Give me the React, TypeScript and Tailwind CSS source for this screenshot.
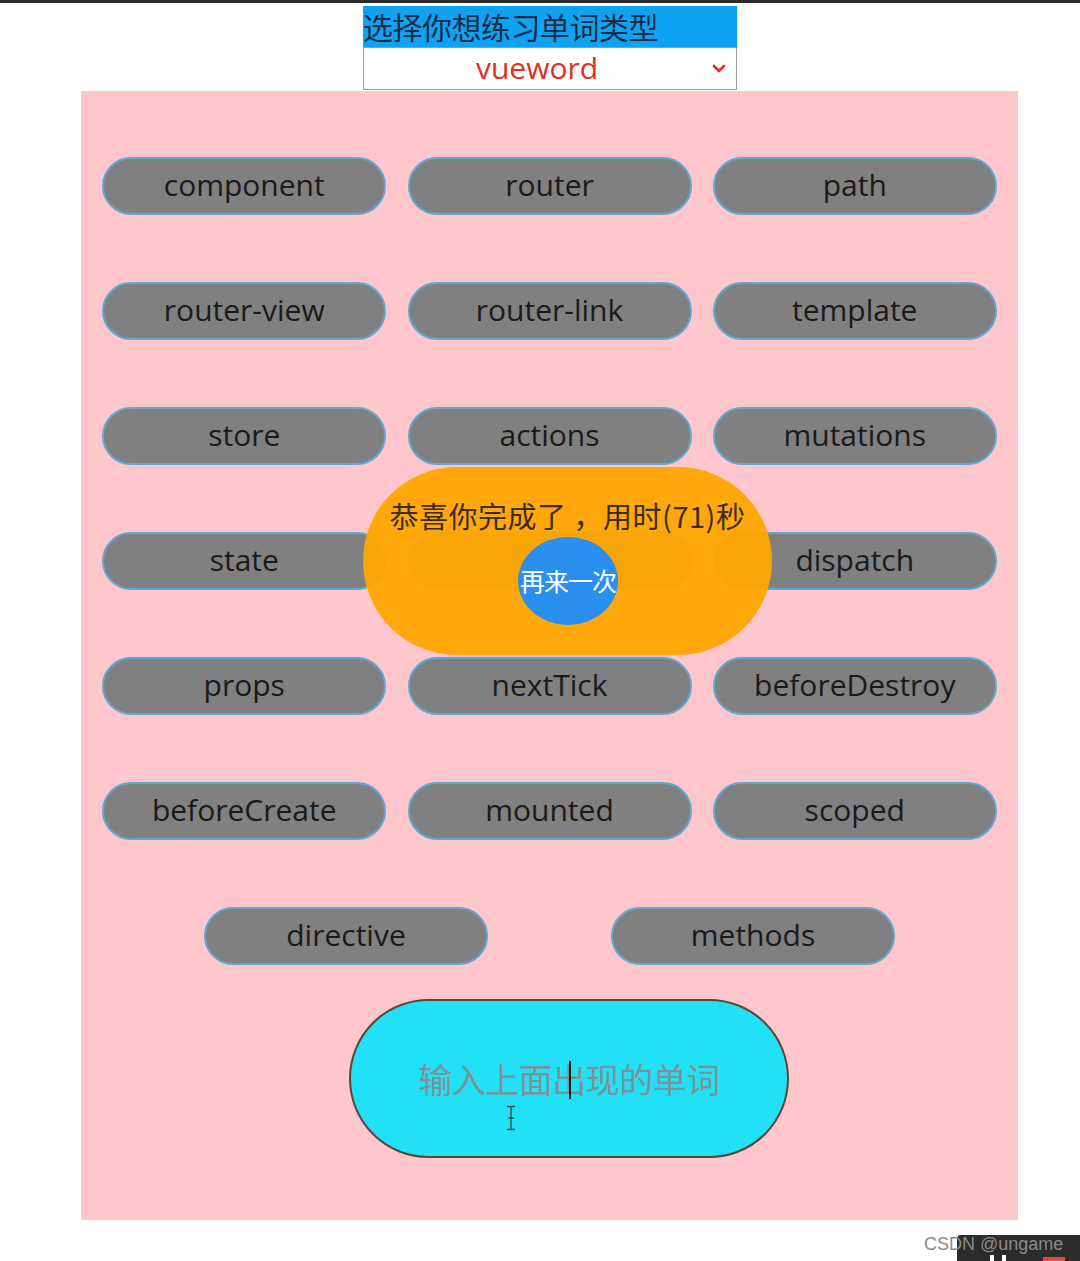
import React from "react";

const words = [
  "component", "router", "path",
  "router-view", "router-link", "template",
  "store", "actions", "mutations",
  "state", "", "dispatch",
  "props", "nextTick", "beforeDestroy",
  "beforeCreate", "mounted", "scoped",
  "directive", "methods",
];

export default function App() {
  return (
    <div className="relative h-[1261px] w-[1080px] overflow-hidden bg-white border-t-[3px] border-[#2a2a2a]" style={{ fontFamily: '"Noto Sans", "Noto Sans CJK SC", sans-serif' }}>
      <div className="ml-[81px] w-[937px]">
        {/* select block */}
        <div className="ml-[282px] mt-[3px] w-[374px]">
          <div className="h-[41px] bg-[#0ea2f2] text-[30px] leading-[41px] text-[#1b2c4a] whitespace-nowrap font-['Noto_Sans_CJK_SC'] tracking-[-0.5px]">
            选择你想练习单词类型
          </div>
          <div className="relative flex h-[43px] items-center justify-center border border-[#9a9a9a] bg-white">
            <span className="text-[30px] leading-none text-[#e3301c] -ml-[26px] -mt-[2px]" style={{ fontFamily: '"Open Sans", sans-serif' }}>vueword</span>
            <svg className="absolute right-[10px] top-[16px]" width="14" height="10" viewBox="0 0 14 10">
              <path d="M2 2 L7 7 L12 2" fill="none" stroke="#e3301c" strokeWidth="2.6" strokeLinecap="round" strokeLinejoin="round" />
            </svg>
          </div>
        </div>

        {/* panel */}
        <div className="relative mt-[1px] h-[1129px] bg-[#ffc6cb] pt-[66px]">
          <div className="flex flex-wrap justify-evenly gap-y-[67px]">
            {words.map((w, i) => (
              <div
                key={i}
                className="flex h-[58px] w-[284px] items-center justify-center rounded-full border-2 border-[#62a6d2] bg-[#808080] pb-[3px] text-[30px] text-[#1a1a1a]"
                style={{ fontFamily: '"Open Sans", sans-serif' }}
              >
                {w}
              </div>
            ))}
          </div>

          {/* input */}
          <div className="relative ml-[268px] mt-[34px] flex h-[159px] w-[440px] items-center justify-center rounded-full border-2 border-[#5a4636] bg-[#22e1f6]">
            <span className="text-[34px] text-[#7f9198] font-['Noto_Sans_CJK_SC'] tracking-[-0.5px]">输入上面出现的单词</span>
            <div className="absolute left-[218px] top-[60px] h-[38px] w-[2px] bg-[#1c1c1c]" />
            <svg className="absolute left-[154px] top-[104px]" width="12" height="26" viewBox="0 0 12 26">
              <path d="M2 1.5 H5 Q6 1.5 6 3 V23 Q6 24.5 5 24.5 H2 M10 1.5 H7 Q6 1.5 6 3 M6 23 Q6 24.5 7 24.5 H10 M3.5 13 H8.5" fill="none" stroke="#444" strokeWidth="1.3" />
            </svg>
          </div>

          {/* overlay */}
          <div className="absolute left-[282px] top-[376px] h-[188px] w-[409px] rounded-full bg-[#ffa500]/95">
            <div className="pt-[28px] text-center text-[29px] leading-[40px] text-[#3a2e1c] whitespace-nowrap font-['Noto_Sans_CJK_SC'] tracking-[0.5px]">
              恭喜你完成了 ，用时(71)秒
            </div>
            <div className="absolute left-[155px] top-[70px] flex h-[88px] w-[100px] items-center justify-center rounded-[50%] bg-[#2b8ff0]">
              <span className="whitespace-nowrap text-[25px] text-white font-['Noto_Sans_CJK_SC'] tracking-[-1px]">再来一次</span>
            </div>
          </div>
        </div>
      </div>

      {/* watermark */}
      <div className="absolute left-[957px] top-[1232px] h-[29px] w-[123px] rounded-tl-[4px] bg-[#2b2b2b]">
        <div className="absolute left-[33px] top-[20px] h-[9px] w-[4px] bg-white" />
        <div className="absolute left-[45px] top-[20px] h-[9px] w-[4px] bg-white" />
        <div className="absolute left-[86px] top-[22px] h-[7px] w-[22px] bg-[#e34b3b]" />
      </div>
      <div className="absolute left-[924px] top-[1228px] text-[18px] leading-[26px] text-[#8a8a8a]" style={{ fontFamily: '"Liberation Sans", sans-serif' }}>
        CSDN @ungame
      </div>
    </div>
  );
}
